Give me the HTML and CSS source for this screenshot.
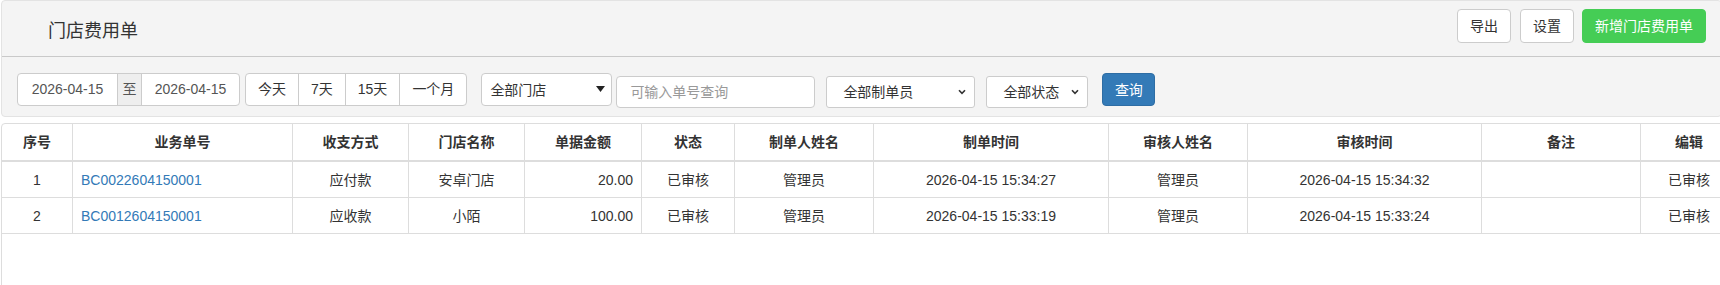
FILE: index.html
```html
<!DOCTYPE html>
<html lang="zh-CN">
<head>
<meta charset="utf-8">
<title>门店费用单</title>
<link rel="stylesheet" href="styles.css">
</head>
<body>
<div class="page">
  <div class="panel">
    <div class="panel-head">
      <h1 class="title">门店费用单</h1>
      <div class="head-actions">
        <button class="btn btn-default">导出</button>
        <button class="btn btn-default">设置</button>
        <button class="btn btn-success">新增门店费用单</button>
      </div>
    </div>
    <div class="filters">
      <div class="date-group">
        <div class="date-input first">2026-04-15</div>
        <div class="addon">至</div>
        <div class="date-input last">2026-04-15</div>
      </div>
      <div class="quick-group">
        <div class="quick">今天</div>
        <div class="quick">7天</div>
        <div class="quick">15天</div>
        <div class="quick">一个月</div>
      </div>
      <div class="select store-select">
        <span>全部门店</span>
        <svg class="caret" width="9" height="6" viewBox="0 0 9 6"><path d="M0 0H9L4.5 6Z" fill="#222"/></svg>
      </div>
      <div class="search-input">可输入单号查询</div>
      <div class="select native staff-select">
        <span>全部制单员</span>
        <svg class="chev" width="8" height="6" viewBox="0 0 8 6"><path d="M1 1.2L4 4.4L7 1.2" fill="none" stroke="#333" stroke-width="1.6"/></svg>
      </div>
      <div class="select native status-select">
        <span>全部状态</span>
        <svg class="chev" width="8" height="6" viewBox="0 0 8 6"><path d="M1 1.2L4 4.4L7 1.2" fill="none" stroke="#333" stroke-width="1.6"/></svg>
      </div>
      <button class="btn btn-primary">查询</button>
    </div>
  </div>

  <div class="table-wrap">
    <table class="grid">
      <thead>
        <tr>
          <th class="c1">序号</th>
          <th class="c2">业务单号</th>
          <th class="c3">收支方式</th>
          <th class="c4">门店名称</th>
          <th class="c5">单据金额</th>
          <th class="c6">状态</th>
          <th class="c7">制单人姓名</th>
          <th class="c8">制单时间</th>
          <th class="c9">审核人姓名</th>
          <th class="c10">审核时间</th>
          <th class="c11">备注</th>
          <th class="c12">编辑</th>
        </tr>
      </thead>
      <tbody>
        <tr>
          <td>1</td>
          <td class="left"><a class="link" href="#">BC0022604150001</a></td>
          <td>应付款</td>
          <td>安卓门店</td>
          <td class="right">20.00</td>
          <td>已审核</td>
          <td>管理员</td>
          <td>2026-04-15 15:34:27</td>
          <td>管理员</td>
          <td>2026-04-15 15:34:32</td>
          <td></td>
          <td>已审核</td>
        </tr>
        <tr>
          <td>2</td>
          <td class="left"><a class="link" href="#">BC0012604150001</a></td>
          <td>应收款</td>
          <td>小陌</td>
          <td class="right">100.00</td>
          <td>已审核</td>
          <td>管理员</td>
          <td>2026-04-15 15:33:19</td>
          <td>管理员</td>
          <td>2026-04-15 15:33:24</td>
          <td></td>
          <td>已审核</td>
        </tr>
      </tbody>
    </table>
  </div>
</div>
</body>
</html>
```

FILE: styles.css
```css
* {
  box-sizing: border-box;
}

html, body {
  margin: 0;
  padding: 0;
  background: #fff;
  overflow: hidden;
}

body {
  font-family: "Liberation Sans", "Noto Sans CJK SC", sans-serif;
  font-size: 14px;
  color: #333;
  line-height: 20px;
}

.page {
  width: 1740px;
  height: 285px;
  overflow: hidden;
  padding-left: 1px;
}

/* ---------- top panel ---------- */
.panel {
  width: 1721px;
  background: #f4f4f4;
  border: 1px solid #e3e3e3;
  border-radius: 4px;
}

.panel-head {
  height: 56px;
  display: flex;
  justify-content: space-between;
  align-items: flex-start;
  border-bottom: 1px solid #c9c9c9;
  padding: 0 15px 0 46px;
}

.title {
  margin: 18px 0 0 0;
  font-size: 18px;
  font-weight: normal;
  line-height: 24px;
  color: #333;
}

.head-actions {
  display: flex;
  gap: 9px;
  margin-top: 8px;
}

.btn {
  font-family: inherit;
  font-size: 14px;
  line-height: 20px;
  height: 34px;
  padding: 6px 12px;
  border: 1px solid #ccc;
  border-radius: 4px;
  background: #fff;
  color: #333;
  cursor: pointer;
}

.btn-success {
  background: #45cd55;
  border-color: #45cd55;
  color: #fff;
  margin-left: -1px;
}

.btn-primary {
  background: #337ab7;
  border-color: #2e6da4;
  color: #fff;
  height: 33px;
  width: 53px;
  padding: 0;
  margin-left: 14px;
}

/* ---------- filters ---------- */
.filters {
  display: flex;
  align-items: flex-start;
  padding: 16px 0 8px 15px;
}

.date-group {
  display: flex;
  width: 223px;
  height: 33px;
  border: 1px solid #ccc;
  border-radius: 4px;
  background: #fff;
  overflow: hidden;
}

.date-input {
  height: 31px;
  line-height: 31px;
  text-align: center;
  color: #555;
}

.date-input.first {
  width: 99px;
}

.date-input.last {
  width: 97px;
}

.addon {
  width: 25px;
  height: 31px;
  line-height: 31px;
  text-align: center;
  background: #eee;
  border-left: 1px solid #ccc;
  border-right: 1px solid #ccc;
  color: #555;
}

.quick-group {
  display: flex;
  height: 33px;
  margin-left: 5px;
  border: 1px solid #ccc;
  border-radius: 4px;
  background: #fff;
  overflow: hidden;
}

.quick {
  padding: 0 12px;
  line-height: 31px;
  color: #333;
  border-left: 1px solid #ccc;
}

.quick:first-child {
  border-left: none;
}

.select {
  display: flex;
  align-items: center;
  justify-content: space-between;
  background: #fff;
  border: 1px solid #ccc;
  border-radius: 4px;
  color: #333;
}

.store-select {
  width: 131px;
  height: 33px;
  margin-left: 14px;
  padding: 0 6px 0 8px;
}

.store-select .caret {
  margin-top: -2px;
}

.search-input {
  width: 199px;
  height: 32px;
  margin-left: 4px;
  margin-top: 3px;
  padding: 0 13px;
  line-height: 30px;
  background: #fff;
  border: 1px solid #ccc;
  border-radius: 4px;
  color: #999;
}

.native {
  height: 32px;
  margin-top: 3px;
  margin-left: 11px;
  padding: 0 8px 0 16px;
  border-radius: 3px;
}

.staff-select {
  width: 149px;
}

.status-select {
  width: 102px;
}

/* ---------- table ---------- */
.table-wrap {
  width: 1738px;
  height: 180px;
  margin-top: 6px;
  border: 1px solid #ddd;
  border-radius: 4px;
  background: #fff;
}

.grid {
  table-layout: fixed;
  width: 1736px;
  border-collapse: separate;
  border-spacing: 0;
}

.grid th,
.grid td {
  padding: 8px;
  text-align: center;
  border-right: 1px solid #ddd;
  white-space: nowrap;
  overflow: hidden;
}

.grid th {
  font-weight: bold;
  border-bottom: 2px solid #ddd;
}

.grid td {
  padding-bottom: 7px;
  border-bottom: 1px solid #ddd;
}

.grid td.left {
  text-align: left;
}

.grid td.right {
  text-align: right;
}

.link {
  color: #337ab7;
  text-decoration: none;
}

.c1 { width: 71px; }
.c2 { width: 220px; }
.c3 { width: 116px; }
.c4 { width: 116px; }
.c5 { width: 117px; }
.c6 { width: 93px; }
.c7 { width: 139px; }
.c8 { width: 235px; }
.c9 { width: 139px; }
.c10 { width: 234px; }
.c11 { width: 159px; }
.c12 { width: 97px; }
```
